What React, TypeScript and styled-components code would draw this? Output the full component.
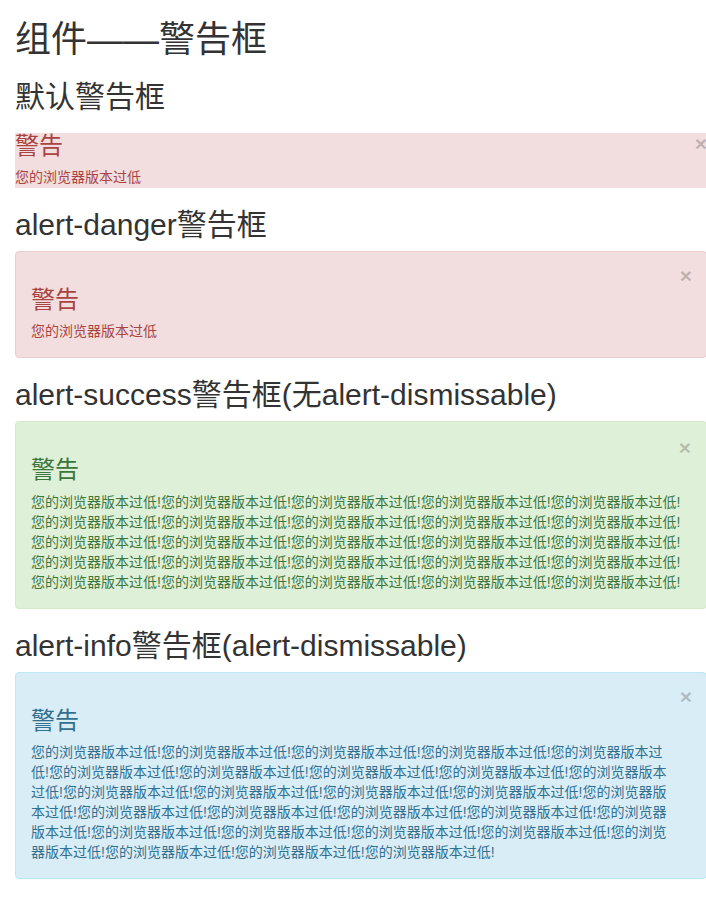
import React from "react";
import styled, {createGlobalStyle, css} from "styled-components";

const GlobalStyle = createGlobalStyle`
  html, body {
    margin: 0;
    padding: 0;
    background: #fff;
    overflow-x: hidden;
  }

  body {
    font-family: "Liberation Sans", "Noto Sans CJK SC", sans-serif;
    font-size: 14px;
    line-height: 1.428571;
    color: #333;
  }
`

const Page = styled.div`
  padding: 0 15px;
  width: 692px;
`

const Title = styled.h1`
  font-size: 36px;
  font-weight: 400;
  line-height: 1.1;
  margin: 20px 0 10px;
  color: #333;
`

const SectionTitle = styled.h2`
  font-size: 30px;
  font-weight: 400;
  line-height: 1.1;
  margin: 20px 0 10px;
  color: #333;
`

type Variant = "danger" | "success" | "info";

const palette: Record<Variant, { bg: string; border: string; text: string }> = {
    danger: {bg: "#f2dede", border: "#ebccd1", text: "#a94442"},
    success: {bg: "#dff0d8", border: "#d6e9c6", text: "#3c763d"},
    info: {bg: "#d9edf7", border: "#bce8f1", text: "#31708f"},
};

const AlertBox = styled.div<{ $variant: Variant; $bare?: boolean; $dismissable?: boolean }>`
  background: ${p => palette[p.$variant].bg};
  color: ${p => palette[p.$variant].text};

  ${p => !p.$bare && css`
    padding: 15px;
    margin-bottom: 20px;
    border: 1px solid ${palette[p.$variant].border};
    border-radius: 4px;
  `}

  ${p => p.$dismissable && css`
    padding-right: 35px;
  `}
`

const AlertHeading = styled.h3`
  font-size: 24px;
  font-weight: 400;
  line-height: 1.1;
  margin: 20px 0 9px;
  color: inherit;
`

const AlertText = styled.p`
  margin: 0;
`

const CloseButton = styled.button<{ $dismissable?: boolean }>`
  float: right;
  padding: 0;
  border: 0;
  background: transparent;
  cursor: pointer;
  font-family: "Liberation Sans", sans-serif;
  font-size: 21px;
  font-weight: bold;
  line-height: 1;
  color: #000;
  text-shadow: 0 1px 0 #fff;
  opacity: 0.2;

  ${p => p.$dismissable && css`
    position: relative;
    top: -2px;
    right: -21px;
  `}
`

const warn = "您的浏览器版本过低";
const repeat = (n: number) => Array.from({length: n}, () => warn + "!").join("");

export default function App() {
    return (
        <>
            <GlobalStyle/>
            <Page>
                <Title>组件——警告框</Title>

                <SectionTitle>默认警告框</SectionTitle>
                <AlertBox $variant="danger" $bare>
                    <CloseButton>×</CloseButton>
                    <AlertHeading>警告</AlertHeading>
                    <AlertText>{warn}</AlertText>
                </AlertBox>

                <SectionTitle>alert-danger警告框</SectionTitle>
                <AlertBox $variant="danger" $dismissable>
                    <CloseButton $dismissable>×</CloseButton>
                    <AlertHeading>警告</AlertHeading>
                    <AlertText>{warn}</AlertText>
                </AlertBox>

                <SectionTitle>alert-success警告框(无alert-dismissable)</SectionTitle>
                <AlertBox $variant="success">
                    <CloseButton>×</CloseButton>
                    <AlertHeading>警告</AlertHeading>
                    <AlertText>{repeat(25)}</AlertText>
                </AlertBox>

                <SectionTitle>alert-info警告框(alert-dismissable)</SectionTitle>
                <AlertBox $variant="info" $dismissable>
                    <CloseButton $dismissable>×</CloseButton>
                    <AlertHeading>警告</AlertHeading>
                    <AlertText>{repeat(28)}</AlertText>
                </AlertBox>
            </Page>
        </>
    );
}
